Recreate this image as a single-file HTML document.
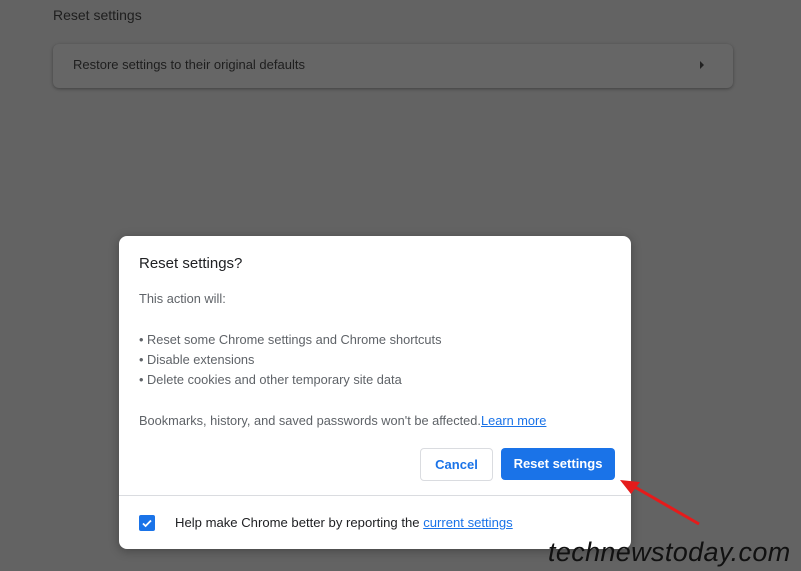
<!DOCTYPE html>
<html><head><style>
body{margin:0;width:801px;height:571px;background:#636363;font-family:"Liberation Sans",sans-serif;position:relative;overflow:hidden}
.a{position:absolute;white-space:nowrap}
</style></head><body>
<div class="a" style="left:53px;top:7px;font-size:14px;color:#1e1e1e">Reset settings</div>
<div class="a" style="left:53px;top:44px;width:680px;height:44px;border-radius:6px;background:#666;box-shadow:0 1px 3px rgba(0,0,0,.35)"></div>
<div class="a" style="left:73px;top:57px;font-size:13px;color:#1e1e1e">Restore settings to their original defaults</div>
<div class="a" style="left:700px;top:61px;width:0;height:0;border-left:4px solid #222;border-top:4px solid transparent;border-bottom:4px solid transparent"></div>

<div class="a" style="left:119px;top:236px;width:512px;height:313px;background:#fff;border-radius:8px;box-shadow:0 2px 10px rgba(0,0,0,.3)"></div>
<div class="a" style="left:139px;top:255px;font-size:15px;color:#202124">Reset settings?</div>
<div class="a" style="left:139px;top:289px;font-size:12.8px;color:#5f6368;line-height:20.3px">This action will:<br><br>• Reset some Chrome settings and Chrome shortcuts<br>• Disable extensions<br>• Delete cookies and other temporary site data<br><br>Bookmarks, history, and saved passwords won't be affected.<span style="color:#1a73e8;text-decoration:underline">Learn more</span></div>
<div class="a" style="left:420px;top:448px;width:71px;height:31px;border:1px solid #dadce0;border-radius:4px;color:#1a73e8;font-size:13px;font-weight:bold;text-align:center;line-height:31px">Cancel</div>
<div class="a" style="left:501px;top:448px;width:114px;height:32px;background:#1a73e8;border-radius:4px;color:#fff;font-size:13px;font-weight:bold;text-align:center;line-height:32px">Reset settings</div>
<div class="a" style="left:119px;top:495px;width:512px;height:1px;background:#dadce0"></div>
<div class="a" style="left:139px;top:515px;width:16px;height:16px;background:#1a73e8;border-radius:2px"><svg width="16" height="16"><path d="M4 8.5l2.6 2.5L12 5.5" stroke="#fff" stroke-width="1.8" fill="none"/></svg></div>
<div class="a" style="left:175px;top:515px;font-size:13.1px;color:#202124">Help make Chrome better by reporting the <span style="color:#1a73e8;text-decoration:underline">current settings</span></div>
<svg class="a" style="left:615px;top:475px" width="90" height="55"><path d="M84 49L18 11" stroke="#e51b1b" stroke-width="3"/><path d="M5 5L25 7L16 19Z" fill="#e51b1b"/></svg>
<div class="a" style="left:548px;top:537px;font-size:27px;font-style:italic;color:#111;letter-spacing:0.35px">technewstoday.com</div>
</body></html>
